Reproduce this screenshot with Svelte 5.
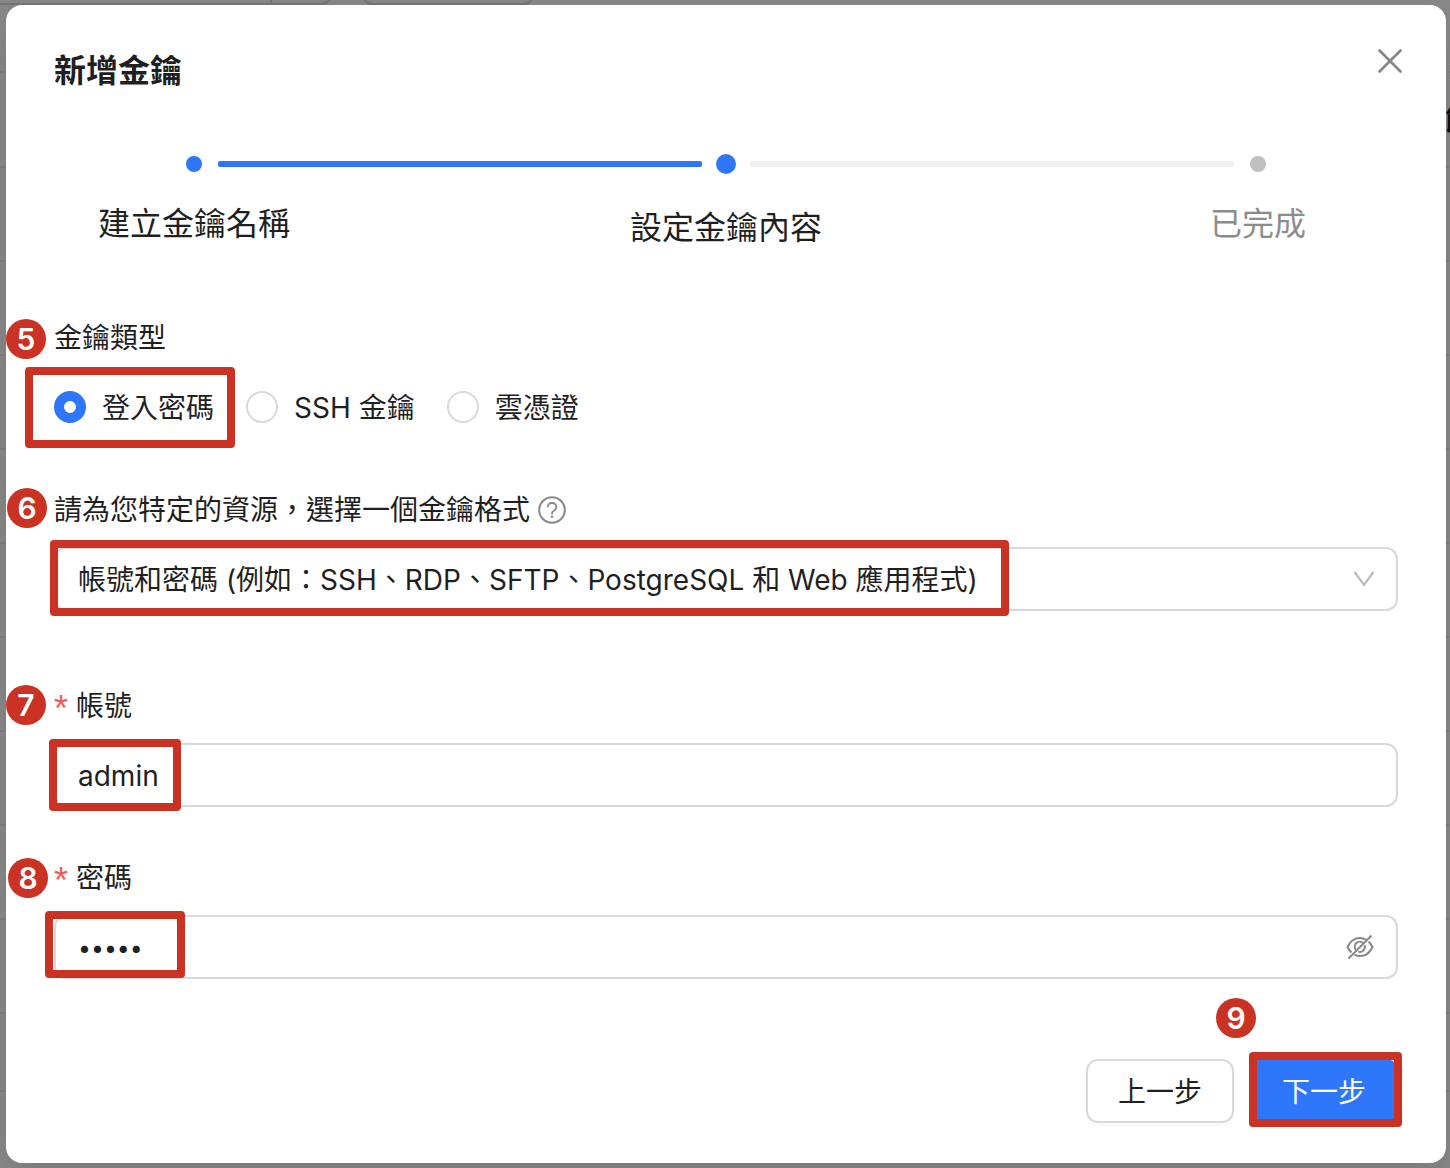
<script>
  const steps = [
    { title: "建立金鑰名稱", status: "finish" },
    { title: "設定金鑰內容", status: "process" },
    { title: "已完成", status: "wait" },
  ];

  const keyTypes = [
    { value: "password", label: "登入密碼" },
    { value: "ssh", label: "SSH 金鑰" },
    { value: "cloud", label: "雲憑證" },
  ];

  const backdropRows = [71, 166, 260, 354, 448, 542, 636, 730, 824, 918, 1012, 1090];

  let keyType = "password";
  let format = "account";
  let account = "admin";
  let password = "admin";
  let showPassword = false;
</script>

<div class="backdrop">
  <div class="behind" aria-hidden="true">
    <div class="tab first"></div>
    <div class="tab second"></div>
    {#each backdropRows as top}
      <div class="row-line" style="top: {top}px"></div>
    {/each}
    <span class="clipped-text">節</span>
  </div>

  <div class="modal" role="dialog" aria-labelledby="modal-title">
    <h1 id="modal-title">新增金鑰</h1>
    <button class="close" type="button" aria-label="關閉">
      <svg viewBox="0 0 32 32" width="32" height="32">
        <path d="M5.500 5.500 26.500 26.500M26.500 5.500 5.500 26.500" stroke="#888" stroke-width="2.800" stroke-linecap="round" />
      </svg>
    </button>

    <div class="track" aria-hidden="true">
      {#each steps as step, i}
        {#if i > 0}
          <span class="line" class:done={steps[i - 1].status === "finish"}></span>
        {/if}
        <span class="slot"><span class="dot {step.status}"></span></span>
      {/each}
    </div>
    <ol class="steps">
      {#each steps as step}
        <li class={step.status}>{step.title}</li>
      {/each}
    </ol>

    <form on:submit|preventDefault>
      <div class="field" role="radiogroup" aria-labelledby="type-label">
        <span class="badge b5">5</span>
        <div class="label" id="type-label">金鑰類型</div>
        <div class="radios">
          {#each keyTypes as type}
            <label class="radio">
              <input type="radio" name="keyType" value={type.value} bind:group={keyType} />
              <span>{type.label}</span>
            </label>
          {/each}
          <span class="mark m5"></span>
        </div>
      </div>

      <div class="field wide">
        <span class="badge b6">6</span>
        <div class="label">
          <label for="format">請為您特定的資源，選擇一個金鑰格式</label>
          <svg class="help" viewBox="0 0 28 28" width="28" height="28" fill="none" stroke="#888">
            <circle cx="14" cy="14" r="12.8" stroke-width="2" />
            <path d="M9.600 11.200c0-2.500 1.900-4.200 4.400-4.200s4.400 1.700 4.400 4c0 2-1.400 3-2.600 3.700-1.200.7-1.800 1.400-1.800 2.600v.9" stroke-width="1.800" />
            <circle cx="14" cy="20.800" r="1.300" fill="#888" stroke="none" />
          </svg>
        </div>
        <div class="control">
          <select id="format" bind:value={format}>
            <option value="account">帳號和密碼 (例如：SSH、RDP、SFTP、PostgreSQL 和 Web 應用程式)</option>
          </select>
          <svg class="arrow" viewBox="0 0 24 24" width="24" height="24" fill="none">
            <path d="M2.500 5 12 18 21.500 5" stroke="#bbb" stroke-width="2.200" />
          </svg>
          <span class="mark m6"></span>
        </div>
      </div>

      <div class="field">
        <span class="badge b7">7</span>
        <div class="label">
          <span class="required">*</span>
          <label for="account">帳號</label>
        </div>
        <div class="control">
          <input id="account" type="text" bind:value={account} />
          <span class="mark m7"></span>
        </div>
      </div>

      <div class="field">
        <span class="badge b8">8</span>
        <div class="label">
          <span class="required">*</span>
          <label for="password">密碼</label>
        </div>
        <div class="control">
          {#if showPassword}
            <input id="password" type="text" bind:value={password} />
          {:else}
            <input id="password" type="password" bind:value={password} />
          {/if}
          <button
            class="eye"
            type="button"
            aria-label="顯示密碼"
            on:click={() => (showPassword = !showPassword)}
          >
            <svg viewBox="0 0 28 28" width="28" height="28" fill="none" stroke="#888" stroke-width="2">
              <path d="M20 6.800C18.200 5.700 16.200 5 14 5 8.500 5 4 8.500 1.500 14c1 2.200 2.300 4 4 5.500" />
              <path d="M22.500 8.500c1.700 1.400 3 3.300 4 5.500-2.500 5.500-7 9-12.500 9-2 0-3.800-.5-5.500-1.400" />
              <path d="M17 9.900A5 5 0 0 0 10 17M18.600 12.200A5 5 0 0 1 12.200 18.600" />
              <path d="M2.500 25.500 25.500 2.500" />
            </svg>
          </button>
          <span class="mark m8"></span>
        </div>
      </div>

      <div class="footer">
        <span class="badge b9">9</span>
        <button class="btn" type="button">上一步</button>
        <div class="next">
          <button class="btn primary" type="submit">下一步</button>
          <span class="mark m9"></span>
        </div>
      </div>
    </form>
  </div>
</div>

<style>
  :global(body) {
    margin: 0;
  }

  .backdrop {
    position: relative;
    box-sizing: border-box;
    min-height: 100vh;
    padding: 5px 4px 5px 6px;
    overflow: hidden;
    background: #888;
    color: #1f1f1f;
    font-family: Inter, "Noto Sans CJK TC", sans-serif;
    font-size: 28px;
    line-height: 46px;
  }

  .behind {
    position: absolute;
    inset: 0;
  }

  .tab {
    position: absolute;
    box-sizing: border-box;
    top: -60px;
    height: 65px;
    border: 2px solid #767676;
    border-radius: 12px;
  }

  .tab.first {
    left: -20px;
    width: 353px;
  }

  .tab.first::after {
    content: "";
    position: absolute;
    right: 59px;
    height: 100%;
    border-right: 2px solid #767676;
  }

  .tab.second {
    left: 361px;
    width: 174px;
  }

  .row-line {
    position: absolute;
    left: 0;
    right: 0;
    height: 2px;
    background: #7e7e7e;
  }

  .clipped-text {
    position: absolute;
    top: 98px;
    right: -23px;
    font-weight: 700;
    color: #111;
  }

  .modal {
    position: relative;
    padding: 40px 48px;
    border-radius: 16px;
    background: #fff;
    box-shadow: 0 12px 32px rgba(0, 0, 0, 0.1);
  }

  h1 {
    margin: 0;
    font-size: 32px;
    font-weight: 700;
    line-height: 52px;
  }

  button {
    font: inherit;
    cursor: pointer;
  }

  .close {
    position: absolute;
    top: 40px;
    right: 40px;
    display: flex;
    padding: 0;
    border: 0;
    background: none;
  }

  .track {
    display: flex;
    align-items: center;
    height: 20px;
    margin-top: 57px;
    padding: 0 116px;
  }

  .slot {
    display: flex;
    justify-content: center;
    width: 48px;
  }

  .line {
    flex: 1;
    height: 6px;
    border-radius: 2px;
    background: #f0f0f0;
  }

  .line.done {
    background: #2f77fa;
  }

  .dot {
    width: 16px;
    height: 16px;
    border-radius: 50%;
    background: #2f77fa;
  }

  .dot.process {
    width: 20px;
    height: 20px;
  }

  .dot.wait {
    background: #bfbfbf;
  }

  .steps {
    display: flex;
    justify-content: space-between;
    margin: 24px 0 0;
    padding: 0;
    list-style: none;
    font-size: 32px;
    line-height: 52px;
    text-align: center;
  }

  .steps li {
    width: 280px;
  }

  .steps .process {
    padding-top: 4px;
  }

  .steps .wait {
    color: #8c8c8c;
  }

  form {
    margin-top: 61px;
  }

  .field {
    position: relative;
    margin-bottom: 48px;
  }

  .field.wide {
    margin-bottom: 72px;
  }

  .label {
    display: flex;
    align-items: center;
    gap: 8px;
    margin-bottom: 14px;
  }

  .required {
    width: 14px;
    color: #f45c55;
    font-family: "Liberation Sans", sans-serif;
    font-size: 36px;
    line-height: 40px;
    padding-top: 6px;
  }

  .radios {
    position: relative;
    display: flex;
    align-items: center;
    gap: 32px;
    height: 64px;
  }

  .radio {
    display: flex;
    align-items: center;
    gap: 16px;
  }

  .radio span {
    padding-top: 2px;
  }

  .radio input {
    appearance: none;
    box-sizing: border-box;
    width: 32px;
    height: 32px;
    margin: 0;
    border: 2px solid #d9d9d9;
    border-radius: 50%;
    background: #fff;
  }

  .radio input:checked {
    border: 10px solid #2f77fa;
  }

  .control {
    position: relative;
  }

  select,
  .control input {
    display: block;
    appearance: none;
    box-sizing: border-box;
    width: 100%;
    height: 64px;
    padding: 2px 22px 0;
    border: 2px solid #d9d9d9;
    border-radius: 12px;
    outline: none;
    background: #fff;
    color: inherit;
    font: inherit;
  }

  .control input[type="password"] {
    font-size: 23px;
  }

  .arrow {
    position: absolute;
    top: 20px;
    right: 22px;
    pointer-events: none;
  }

  .eye {
    position: absolute;
    top: 18px;
    right: 24px;
    display: flex;
    padding: 0;
    border: 0;
    background: none;
  }

  .footer {
    position: relative;
    display: flex;
    justify-content: flex-end;
    gap: 16px;
    margin-top: 80px;
  }

  .next {
    position: relative;
  }

  .btn {
    box-sizing: border-box;
    width: 148px;
    height: 64px;
    padding: 2px 0 0;
    border: 2px solid #d9d9d9;
    border-radius: 12px;
    background: #fff;
    color: inherit;
    box-shadow: 0 4px 0 rgba(0, 0, 0, 0.02);
  }

  .btn.primary {
    border-color: #2f77fa;
    background: #2f77fa;
    color: #fff;
  }

  /* walkthrough numbers and frames laid over the form */
  .badge {
    position: absolute;
    width: 40px;
    height: 40px;
    border-radius: 50%;
    background: #ca3323;
    color: #fff;
    font-size: 30px;
    font-weight: 600;
    line-height: 40px;
    text-align: center;
  }

  .b5 {
    top: 4px;
    left: -48px;
  }

  .b6 {
    top: 1px;
    left: -47px;
  }

  .b7 {
    top: 2px;
    left: -48px;
  }

  .b8 {
    top: 3px;
    left: -46px;
  }

  .b9 {
    top: -61px;
    right: 142px;
  }

  .mark {
    position: absolute;
    box-sizing: border-box;
    border: 8px solid #ca3323;
    border-radius: 4px;
    pointer-events: none;
  }

  .m5 {
    top: -8px;
    left: -29px;
    width: 210px;
    height: 81px;
  }

  .m6 {
    top: -7px;
    left: -4px;
    width: 959px;
    height: 76px;
  }

  .m7 {
    top: -4px;
    left: -5px;
    width: 132px;
    height: 72px;
  }

  .m8 {
    top: -4px;
    left: -9px;
    width: 140px;
    height: 67px;
  }

  .m9 {
    top: -7px;
    left: -1px;
    width: 153px;
    height: 75px;
  }
</style>
